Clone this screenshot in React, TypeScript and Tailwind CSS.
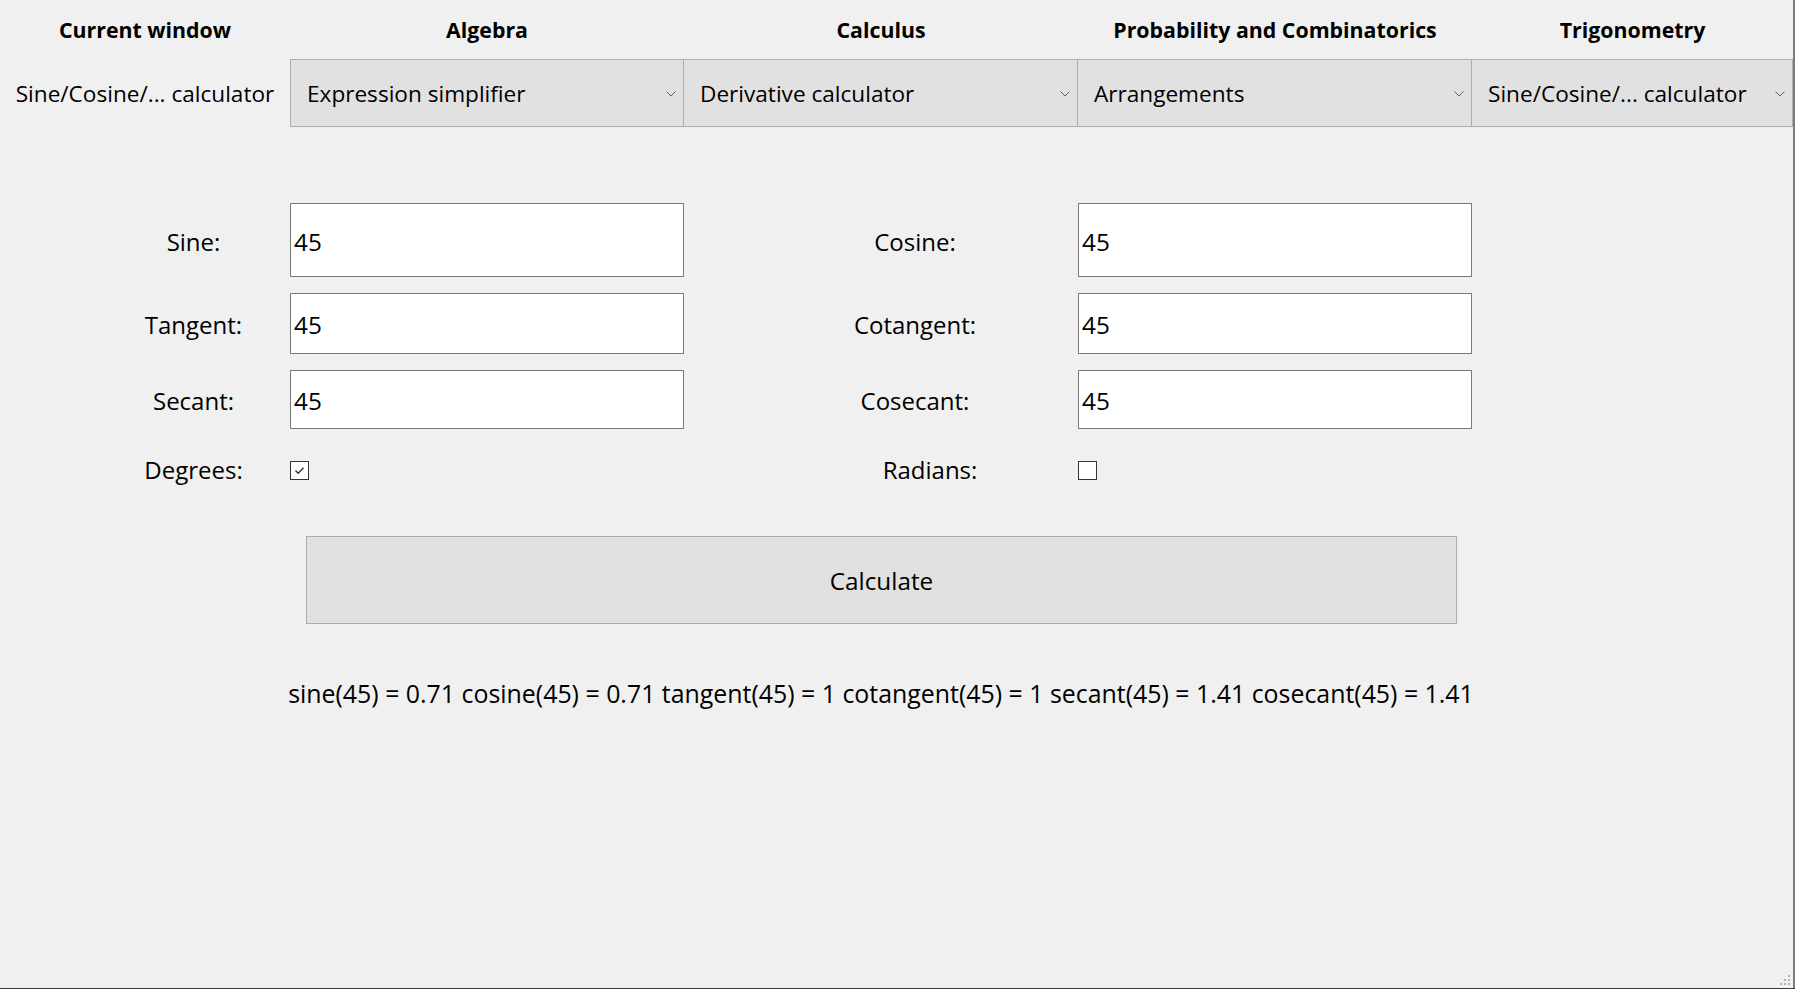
import React from "react";

const FONT = { fontFamily: '"Segoe UI", "Open Sans", "Noto Sans", sans-serif' };

function Chevron() {
  return (
    <svg width="10" height="6" viewBox="0 0 10 6" className="shrink-0">
      <path d="M0.5 0.5 L5 5 L9.5 0.5" fill="none" stroke="#606060" strokeWidth="1" />
    </svg>
  );
}

function Combo({ text, first }: { text: string; first?: boolean }) {
  return (
    <div
      className={
        "flex items-center justify-between h-[68px] bg-[#e1e1e1] border-y border-r border-[#adadad] pl-[16px] pr-[7px] pt-[2px] text-[22.6px] " +
        (first ? "border-l" : "")
      }
    >
      <span className="whitespace-nowrap">{text}</span>
      <Chevron />
    </div>
  );
}

function TextBox({ h }: { h: string }) {
  return (
    <div className={"flex items-center bg-white border border-[#7a7a7a] pl-[3px] pt-[4px] text-[24.3px] " + h}>
      <span>45</span>
    </div>
  );
}

function Label({ text, extra, tight }: { text: string; extra?: string; tight?: boolean }) {
  return (
    <div
      className={
        "h-full flex items-center justify-center whitespace-nowrap text-[24px] " +
        (tight ? "pb-[1px] " : "pt-[3px] ") +
        (extra ?? "")
      }
    >
      {text}
    </div>
  );
}

function CheckBox({ checked }: { checked?: boolean }) {
  return (
    <div className="w-[19px] h-[19px] bg-white border border-[#333333] flex items-center justify-center">
      {checked && (
        <svg width="13" height="13" viewBox="0 0 13 13">
          <path d="M2.5 6.5 L5.2 9.2 L10.5 3.8" fill="none" stroke="#333333" strokeWidth="1.4" />
        </svg>
      )}
    </div>
  );
}

export default function App() {
  return (
    <div
      className="relative w-[1795px] h-[989px] bg-[#f0f0f0] text-black text-[21.33px] overflow-hidden"
      style={FONT}
    >
      <div className="flex flex-col w-[1793px] h-[988px]">
        {/* header grid */}
        <div className="grid grid-cols-[290px_394px_394px_394px_321px]">
          {["Current window", "Algebra", "Calculus", "Probability and Combinatorics", "Trigonometry"].map((t) => (
            <div key={t} className="h-[59px] flex items-center justify-center font-bold pt-[1px]">
              {t}
            </div>
          ))}
          <div className="h-[68px] flex items-center justify-center whitespace-nowrap text-[22.6px] pt-[2px]">
            Sine/Cosine/... calculator
          </div>
          <Combo text="Expression simplifier" first />
          <Combo text="Derivative calculator" />
          <Combo text="Arrangements" />
          <Combo text="Sine/Cosine/... calculator" />
        </div>

        {/* form */}
        <div className="mt-[76px] grid grid-cols-[97px_193px_394px_68px_326px_394px] grid-rows-[74px_61px_59px] gap-y-[16px] items-center">
          <div />
          <Label text="Sine:" />
          <TextBox h="h-[74px]" />
          <div />
          <Label text="Cosine:" />
          <TextBox h="h-[74px]" />

          <div />
          <Label text="Tangent:" />
          <TextBox h="h-[61px]" />
          <div />
          <Label text="Cotangent:" />
          <TextBox h="h-[61px]" />

          <div />
          <Label text="Secant:" />
          <TextBox h="h-[59px]" />
          <div />
          <Label text="Cosecant:" />
          <TextBox h="h-[59px]" />
        </div>

        {/* checkbox row */}
        <div className="mt-[32px] h-[19px] grid grid-cols-[97px_193px_394px_68px_326px_394px] grid-rows-[19px] items-center">
          <div />
          <Label text="Degrees:" tight />
          <div className="h-[19px]">
            <CheckBox checked />
          </div>
          <div />
          <Label text="Radians:" tight extra="pl-[30px]" />
          <div className="h-[19px]">
            <CheckBox />
          </div>
        </div>

        {/* button */}
        <div className="mt-[56px] pl-[306px]">
          <div className="w-[1151px] h-[88px] bg-[#e1e1e1] border border-[#adadad] flex items-center justify-center text-[24.3px] pt-[2px]">
            Calculate
          </div>
        </div>

        {/* results */}
        <div className="mt-[51px] w-[1762px] flex justify-center text-[24.9px] leading-[36px]">
          <span className="whitespace-nowrap">
            sine(45) = 0.71 cosine(45) = 0.71 tangent(45) = 1 cotangent(45) = 1 secant(45) = 1.41 cosecant(45) = 1.41
          </span>
        </div>
      </div>

      {/* window right border */}
      <div className="absolute top-0 right-0 w-[2px] h-full bg-[#7d7d7d]" />
      {/* bottom taskbar sliver */}
      <div className="absolute bottom-0 left-0 w-full h-[1px] bg-[#3c3c44]" />
      {/* resize grip */}
      <svg className="absolute right-[4px] bottom-[3px]" width="12" height="12" viewBox="0 0 12 12">
        {[
          [9, 1],
          [9, 5],
          [5, 5],
          [9, 9],
          [5, 9],
          [1, 9],
        ].map(([x, y], i) => (
          <rect key={i} x={x} y={y} width="2" height="2" fill="#b0b0b0" />
        ))}
      </svg>
    </div>
  );
}
